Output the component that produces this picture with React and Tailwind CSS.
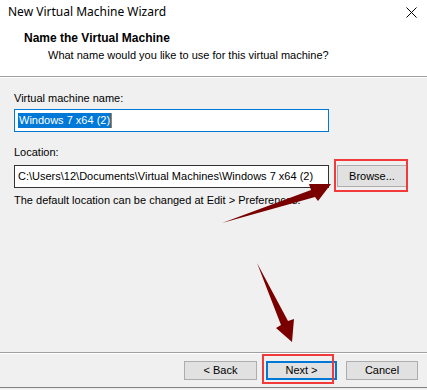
import React from "react";

export default function App() {
  return (
    <div
      className="relative w-[427px] h-[390px] overflow-hidden bg-[#f0f0f0] text-[11px] text-black flex flex-col"
      style={{ fontFamily: '"Liberation Sans", Arial, sans-serif' }}
    >
      {/* Header */}
      <div className="bg-white h-[77px] border-b border-[#a0a0a0] flex flex-col">
        <div
          className="h-[24px] flex items-center justify-between pl-[8px] pr-[10px]"
          style={{ fontFamily: '"Noto Sans", sans-serif' }}
        >
          <span className="text-[12px] leading-none">New Virtual Machine Wizard</span>
          <svg width="11" height="11" viewBox="0 0 11 11" className="mt-[1px]">
            <path d="M0.5 0.5 L10.5 10.5 M10.5 0.5 L0.5 10.5" stroke="#000" strokeWidth="1" />
          </svg>
        </div>
        <div className="pl-[24px] pt-[6px] font-bold leading-[16px] text-[12px]">Name the Virtual Machine</div>
        <div className="pl-[48px] leading-[16px] pt-[1px]">What name would you like to use for this virtual machine?</div>
      </div>
      <div className="h-px bg-white" />

      {/* Body */}
      <div className="flex-1 px-[14px] pt-[12px] flex flex-col">
        <div className="leading-[16px]">Virtual machine name:</div>
        <div className="mt-[3px] w-[315px] h-[23px] border border-[#0078d7] bg-white flex items-center pl-[3px]">
          <span className="bg-[#0078d7] text-white leading-[15px] px-[1px]">Windows 7 x64 (2)</span>
          <span className="w-px h-[15px] bg-[#e07000]" />
        </div>
        <div className="mt-[12px] leading-[16px]">Location:</div>
        <div className="mt-[5px] flex items-start">
          <div className="w-[315px] h-[23px] border border-[#333] bg-white flex items-center pl-[3px] leading-none whitespace-nowrap overflow-hidden">
            C:\Users\12\Documents\Virtual Machines\Windows 7 x64 (2)
          </div>
          <div className="relative ml-[8px] w-[70px] h-[22px] bg-[#e1e1e1] border border-[#adadad] flex items-center justify-center">
            Browse...
            <div className="absolute left-[-4px] top-[-7px] w-[74px] h-[33px] border-[2px] border-[#f23a3a]" />
          </div>
        </div>
        <div className="mt-[4px] leading-[16px]">The default location can be changed at Edit &gt; Preferences.</div>
      </div>

      {/* Footer */}
      <div className="h-px bg-[#a0a0a0]" />
      <div className="h-px bg-white" />
      <div className="h-[33px] flex items-start justify-end pr-[9px] pt-[7px]">
        <div className="w-[73px] h-[19px] bg-[#e1e1e1] border border-[#adadad] flex items-center justify-center">
          &lt; Back
        </div>
        <div className="relative ml-[9px] w-[71px] h-[19px] bg-[#e1e1e1] border-[2px] border-[#0078d7] flex items-center justify-center">
          Next &gt;
          <div className="absolute left-[-6px] top-[-9px] w-[72px] h-[30px] border-[2px] border-[#f23a3a]" />
        </div>
        <div className="ml-[9px] w-[72px] h-[19px] bg-[#e1e1e1] border border-[#adadad] flex items-center justify-center">
          Cancel
        </div>
      </div>
      <div className="h-[3px] border-t border-[#808080] bg-[#f0f0f0]" />

      {/* Annotation arrows */}
      <svg className="absolute left-0 top-0 pointer-events-none" width="427" height="390" viewBox="0 0 427 390">
        <polygon points="222,223 311,190 309,184 331,184 318,201 315,197" fill="#7a0000" />
        <polygon points="257,263 281,325 276,328 292,342 294,319 288,321" fill="#7a0000" />
      </svg>
    </div>
  );
}
